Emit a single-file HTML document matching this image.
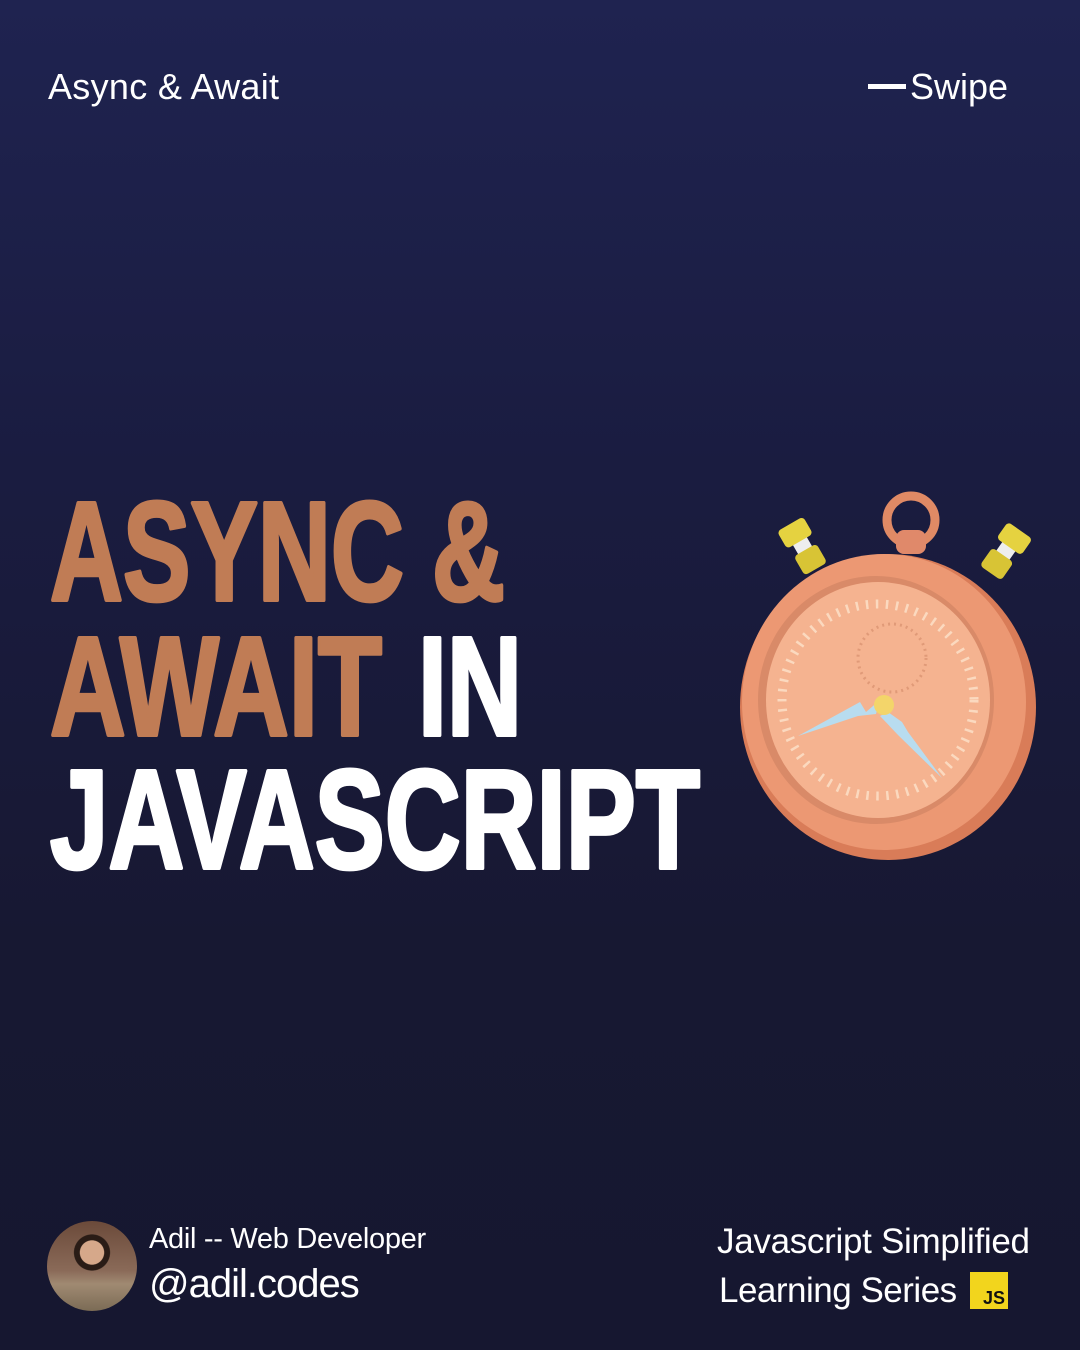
<!DOCTYPE html>
<html><head><meta charset="utf-8"><style>
html,body{margin:0;padding:0}
body{width:1080px;height:1350px;overflow:hidden;background:linear-gradient(180deg,#1f2350 0%,#1a1c40 35%,#171832 70%,#161730 100%);font-family:"Liberation Sans",sans-serif;color:#fff;position:relative}
.t{position:absolute;white-space:nowrap}
</style></head><body>
<div class="t" style="left:48px;top:66px;font-size:36px;letter-spacing:0.3px">Async &amp; Await</div>
<div class="t" style="left:868px;top:66px;font-size:36px;"><span style="display:inline-block;width:38px;height:5px;background:#fff;vertical-align:middle;margin-right:4px;position:relative;top:-3px"></span>Swipe</div>

<svg style="position:absolute;left:0;top:0" width="1080" height="1350">
<g font-family="Liberation Sans Narrow, Liberation Sans, sans-serif" font-weight="bold" font-size="141" stroke-width="4" stroke-linejoin="round">
<text x="50" y="600" fill="#c07c55" stroke="#c07c55" textLength="455" lengthAdjust="spacingAndGlyphs">ASYNC &amp;</text>
<text x="50" y="735" fill="#c07c55" stroke="#c07c55" textLength="332" lengthAdjust="spacingAndGlyphs">AWAIT</text>
<text x="418" y="735" fill="#fff" stroke="#fff" textLength="104" lengthAdjust="spacingAndGlyphs">IN</text>
<text x="50" y="868" fill="#fff" stroke="#fff" textLength="650" lengthAdjust="spacingAndGlyphs">JAVASCRIPT</text>
</g>
<g>
<circle cx="911" cy="520" r="24" fill="none" stroke="#e08a65" stroke-width="9"/>
<rect x="896" y="530" width="30" height="24" rx="8" fill="#e0896a"/>
<g transform="rotate(-30 805 550)"><rect x="797" y="525" width="16" height="40" fill="#eee"/><rect x="790" y="520" width="30" height="20" rx="4" fill="#e5d240"/><rect x="792" y="550" width="26" height="22" rx="4" fill="#d8c435"/></g>
<g transform="rotate(35 1003 555)"><rect x="995" y="530" width="16" height="40" fill="#eee"/><rect x="988" y="525" width="30" height="20" rx="4" fill="#e5d240"/><rect x="990" y="555" width="26" height="22" rx="4" fill="#d8c435"/></g>
<ellipse cx="888" cy="707" rx="148" ry="153" fill="#d97c58"/>
<ellipse cx="884" cy="702" rx="142" ry="148" fill="#ec9873"/>
<ellipse cx="876" cy="700" rx="118" ry="124" fill="#d98a68"/>
<ellipse cx="878" cy="700" rx="112" ry="118" fill="#f5b390"/>
<circle cx="892" cy="658" r="34" fill="none" stroke="#e09a78" stroke-width="3" stroke-dasharray="2 4"/>
<circle cx="878" cy="700" r="96" fill="none" stroke="#fbd9bf" stroke-width="9" stroke-dasharray="2.5 7.5"/>
<polygon points="798,736 860,702 866,712 880,700 876,714 858,716" fill="#b8dcef"/>
<polygon points="888,712 902,722 908,732 942,778 898,735 880,716" fill="#b8dcef"/>
<circle cx="884" cy="705" r="10" fill="#f3d56a"/>
</g>
</svg>

<div style="position:absolute;left:47px;top:1221px;width:90px;height:90px;border-radius:50%;background:radial-gradient(circle at 50% 35%,#d6a88a 0 16%,#2a1c16 17% 24%,transparent 25%),linear-gradient(180deg,#6b4a3a 0%,#8a6a58 55%,#a08a72 70%,#7b6b55 100%)"></div>
<div class="t" style="left:149px;top:1223px;font-size:29px;letter-spacing:-0.3px">Adil -- Web Developer</div>
<div class="t" style="left:149px;top:1262px;font-size:40px;letter-spacing:-1px">@adil.codes</div>
<div class="t" style="left:717px;top:1222px;font-size:35px;letter-spacing:-0.3px">Javascript Simplified</div>
<div class="t" style="left:719px;top:1271px;font-size:35px;letter-spacing:-0.5px">Learning Series</div>
<div style="position:absolute;left:970px;top:1272px;width:38px;height:37px;background:#f2d51d;color:#111;font-weight:bold;font-size:18px;line-height:18px;text-align:right;box-sizing:border-box;padding:17px 3px 0 0;font-family:'Liberation Sans',sans-serif">JS</div>
</body></html>
